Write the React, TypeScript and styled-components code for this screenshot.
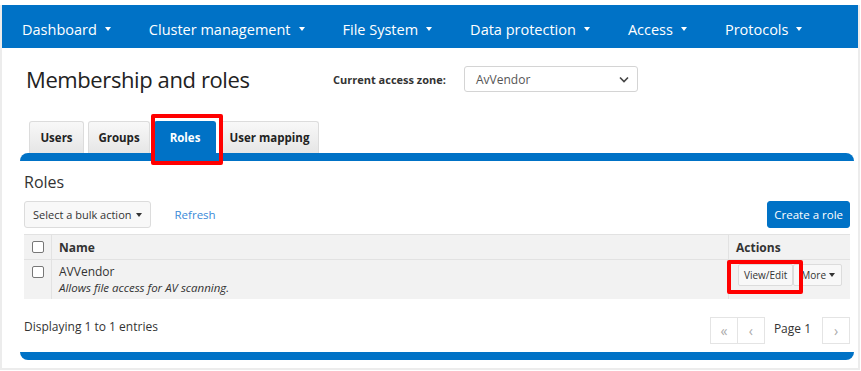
import React from 'react';
import styled, { createGlobalStyle } from 'styled-components';

const GlobalStyle = createGlobalStyle`
  html, body {
    margin: 0;
    padding: 0;
    background: #fff;
  }
  body {
    font-family: 'Open Sans', 'Noto Sans', sans-serif;
    color: #333;
  }
`;

const Frame = styled.div`
  width: 860px;
  box-sizing: border-box;
  margin-top: 5px;
  border-left: 2px solid #ececec;
  border-right: 2px solid #ececec;
  border-bottom: 2px solid #ececec;
`;

const NavBar = styled.nav`
  display: flex;
  align-items: center;
  gap: 38px;
  height: 43px;
  box-sizing: border-box;
  padding: 5px 0 0 20px;
  background: #0072c6;
`;

const NavItem = styled.div`
  display: flex;
  align-items: center;
  gap: 8px;
  color: #fff;
  font-size: 14.5px;
  white-space: nowrap;
`;

const Caret = styled.span<{ $color?: string }>`
  display: inline-block;
  width: 0;
  height: 0;
  border-left: 3px solid transparent;
  border-right: 3px solid transparent;
  border-top: 4px solid ${p => p.$color || '#fff'};
`;

const Main = styled.main`
  padding: 0 4px 8px 18px;
`;

const TitleRow = styled.div`
  display: flex;
  align-items: center;
  height: 62px;
  padding-left: 6px;
`;

const Title = styled.h1`
  width: 307px;
  margin: 0;
  font-size: 22px;
  letter-spacing: -0.4px;
  font-weight: 400;
  color: #222;
`;

const ZoneLabel = styled.label`
  width: 131px;
  font-size: 11px;
  font-weight: 700;
`;

const Select = styled.div`
  display: flex;
  align-items: center;
  justify-content: space-between;
  width: 174px;
  height: 26px;
  box-sizing: border-box;
  padding: 0 8px 0 11px;
  border: 1px solid #d4d4d4;
  border-radius: 3px;
  font-size: 12px;
  color: #555;
`;

const TabRow = styled.div`
  display: flex;
  gap: 4px;
  padding: 11px 0 0 9px;
`;

const Tab = styled.div<{ $active?: boolean; $w: number }>`
  position: relative;
  display: flex;
  align-items: center;
  justify-content: center;
  width: ${p => p.$w}px;
  height: 32px;
  box-sizing: border-box;
  border: 1px solid ${p => (p.$active ? '#0072c6' : '#dcdcdc')};
  border-bottom: none;
  border-radius: 3px 3px 0 0;
  background: ${p => (p.$active ? '#0072c6' : 'linear-gradient(#f8f8f8, #e6e6e6)')};
  color: ${p => (p.$active ? '#fff' : '#222')};
  font-size: 11.5px;
  font-weight: 700;
  white-space: nowrap;
`;

const Highlight = styled.span<{ $t: number; $r: number; $b: number; $l: number }>`
  position: absolute;
  top: ${p => p.$t}px;
  right: ${p => p.$r}px;
  bottom: ${p => p.$b}px;
  left: ${p => p.$l}px;
  border: 4px solid #f00;
  border-radius: 2px;
  z-index: 2;
  pointer-events: none;
`;

const Band = styled.div<{ $bottom?: boolean }>`
  height: 8px;
  background: #0072c6;
  border-radius: ${p => (p.$bottom ? '0 0 8px 8px' : '8px 8px 0 0')};
`;

const Panel = styled.section`
  padding: 0 4px;
`;

const SectionTitle = styled.h2`
  margin: 11px 0 0;
  font-size: 16px;
  font-weight: 400;
  line-height: 20px;
`;

const Toolbar = styled.div`
  display: flex;
  align-items: center;
  height: 27px;
  margin-top: 9px;
`;

const Button = styled.button<{ $primary?: boolean }>`
  display: inline-flex;
  align-items: center;
  gap: 4px;
  height: 27px;
  padding: 0 ${p => (p.$primary ? 6 : 8)}px;
  border: 1px solid ${p => (p.$primary ? '#0072c6' : '#dcdcdc')};
  border-radius: 3px;
  background: ${p => (p.$primary ? '#0072c6' : '#f8f8f8')};
  color: ${p => (p.$primary ? '#fff' : '#333')};
  font-family: inherit;
  font-size: ${p => (p.$primary ? 11.5 : 11)}px;
`;

const LinkButton = styled.a`
  margin-left: 24px;
  color: #3a8ad8;
  font-size: 11.5px;
`;

const Spacer = styled.div`
  flex: 1;
`;

const Table = styled.table`
  width: 100%;
  margin-top: 6px;
  border-collapse: collapse;
  background: #f2f2f2;
  font-size: 12px;
`;

const HeadCell = styled.th<{ $w?: number }>`
  width: ${p => (p.$w ? `${p.$w - 14}px` : 'auto')};
  height: 24px;
  padding: 0 7px;
  text-align: left;
  font-weight: 700;
  border-top: 1px solid #e2e2e2;
  border-left: 1px solid #e2e2e2;
  &:first-child {
    border-left: none;
  }
`;

const Cell = styled.td`
  height: 39px;
  padding: 0 7px;
  vertical-align: top;
  border-top: 1px solid #e2e2e2;
  border-left: 1px solid #e2e2e2;
  &:first-child {
    border-left: none;
  }
`;

const Check = styled.span`
  display: block;
  width: 10px;
  height: 10px;
  margin-left: 1px;
  border: 1px solid #777;
  border-radius: 2px;
  background: #fff;
`;

const CheckWrap = styled.div`
  padding-top: 6px;
`;

const RoleName = styled.div`
  padding-top: 4px;
  line-height: 16px;
`;

const RoleDesc = styled.div`
  font-style: italic;
  font-size: 11.5px;
  line-height: 16px;
`;

const ActionGroup = styled.div`
  display: flex;
  padding-top: 4px;
  padding-left: 2px;
`;

const SmallButton = styled.button`
  position: relative;
  display: inline-flex;
  align-items: center;
  gap: 3px;
  height: 22px;
  padding: 0 5px;
  border: 1px solid #dcdcdc;
  border-radius: 2px;
  background: #f8f8f8;
  color: #333;
  font-family: inherit;
  font-size: 10px;
  & + & {
    padding: 0 6px 0 7px;
  }
`;

const Footer = styled.div`
  display: flex;
  align-items: flex-start;
  justify-content: space-between;
  margin-top: 18px;
  margin-bottom: 8px;
  font-size: 12px;
`;

const FooterText = styled.span`
  padding-top: 1px;
`;

const Pager = styled.div`
  display: flex;
  align-items: center;
`;

const PageBtn = styled.span`
  display: flex;
  align-items: center;
  justify-content: center;
  width: 28px;
  height: 27px;
  box-sizing: border-box;
  border: 1px solid #e4e4e4;
  background: #fff;
  color: #aaa;
  font-size: 14px;
  & + & {
    margin-left: -1px;
  }
`;

const PageLabel = styled.span`
  padding: 0 11px 4px 9px;
  font-size: 12px;
`;

const navItems = ['Dashboard', 'Cluster management', 'File System', 'Data protection', 'Access', 'Protocols'];

export default function App() {
  return (
    <>
      <GlobalStyle />
      <Frame>
        <NavBar>
          {navItems.map(item => (
            <NavItem key={item}>
              {item}
              <Caret />
            </NavItem>
          ))}
        </NavBar>
        <Main>
          <TitleRow>
            <Title>Membership and roles</Title>
            <ZoneLabel>Current access zone:</ZoneLabel>
            <Select>
              AvVendor
              <svg width="10" height="7" viewBox="0 0 10 7">
                <path d="M1 1.5l4 4 4-4" fill="none" stroke="#444" strokeWidth="1.6" />
              </svg>
            </Select>
          </TitleRow>
          <TabRow>
            <Tab $w={55}>Users</Tab>
            <Tab $w={62}>Groups</Tab>
            <Tab $w={62} $active>
              Roles
              <Highlight $t={-8} $r={-8} $b={-12} $l={-4} />
            </Tab>
            <Tab $w={99}>User mapping</Tab>
          </TabRow>
          <Band />
          <Panel>
            <SectionTitle>Roles</SectionTitle>
            <Toolbar>
              <Button>
                Select a bulk action
                <Caret $color="#333" />
              </Button>
              <LinkButton>Refresh</LinkButton>
              <Spacer />
              <Button $primary>Create a role</Button>
            </Toolbar>
            <Table>
              <thead>
                <tr>
                  <HeadCell $w={26}>
                    <Check />
                  </HeadCell>
                  <HeadCell>Name</HeadCell>
                  <HeadCell $w={121}>Actions</HeadCell>
                </tr>
              </thead>
              <tbody>
                <tr>
                  <Cell>
                    <CheckWrap>
                      <Check />
                    </CheckWrap>
                  </Cell>
                  <Cell>
                    <RoleName>AVVendor</RoleName>
                    <RoleDesc>Allows file access for AV scanning.</RoleDesc>
                  </Cell>
                  <Cell>
                    <ActionGroup>
                      <SmallButton>
                        View/Edit
                        <Highlight $t={-5} $r={-11} $b={-9} $l={-12} />
                      </SmallButton>
                      <SmallButton>
                        More
                        <Caret $color="#333" />
                      </SmallButton>
                    </ActionGroup>
                  </Cell>
                </tr>
              </tbody>
            </Table>
            <Footer>
              <FooterText>Displaying 1 to 1 entries</FooterText>
              <Pager>
                <PageBtn>«</PageBtn>
                <PageBtn>‹</PageBtn>
                <PageLabel>Page 1</PageLabel>
                <PageBtn>›</PageBtn>
              </Pager>
            </Footer>
          </Panel>
          <Band $bottom />
        </Main>
      </Frame>
    </>
  );
}
